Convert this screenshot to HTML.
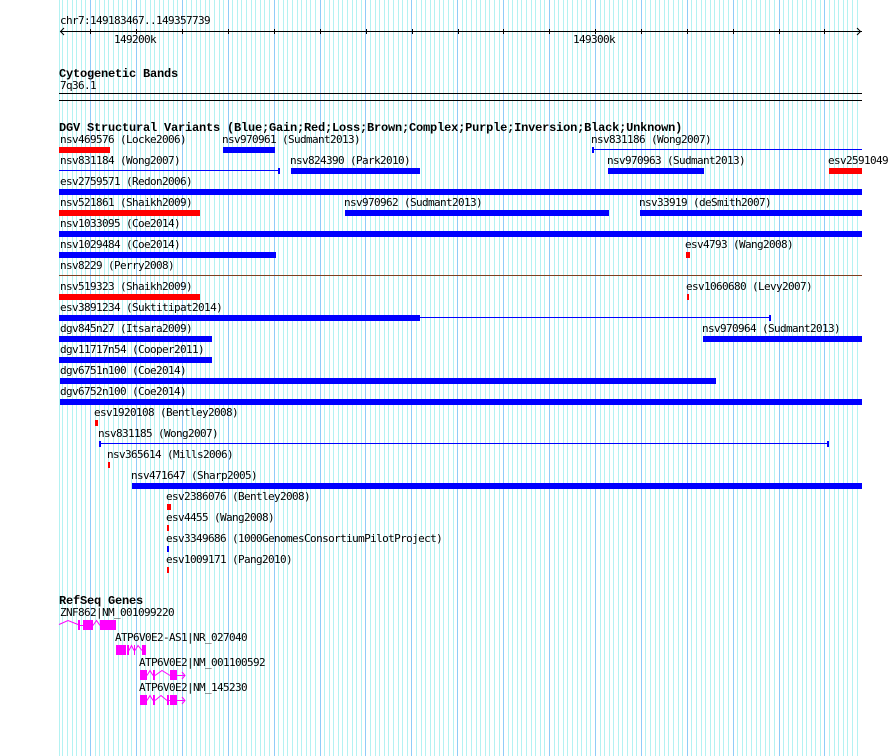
<!DOCTYPE html>
<html><head><meta charset="utf-8"><title>GBrowse</title>
<style>
html,body{margin:0;padding:0;background:#fff;width:890px;height:756px;overflow:hidden}
svg{display:block}
text{font-family:"DejaVu Sans Mono","Liberation Mono",monospace;font-size:11px;letter-spacing:-.62px;fill:#000;white-space:pre;transform:translateY(-1px)}
text.b{font-family:"Liberation Mono",monospace;font-size:12px;font-weight:bold;letter-spacing:-.2px}
.r{fill:#f00}.u{fill:#00f}.m{fill:#f0f}
</style></head><body>
<svg id="s" xmlns="http://www.w3.org/2000/svg" width="890" height="756" viewBox="0 0 890 756" shape-rendering="crispEdges">
<path id="minor" fill="#b4f2f2"/>
<path id="major" fill="#90ccf8"/>
<script>
(function(){function p(x){return "M"+x+" 0h1v756h-1z";}var a=p(59),b="";for(var k=149184;k<=149357;k++){var x=60+Math.round((k-149183.467)*4.5905);if(k%10==0)b+=p(x);else a+=p(x);}
document.getElementById("minor").setAttribute("d",a);document.getElementById("major").setAttribute("d",b);})();
</script>
<text x="60" y="25">chr7:149183467..149357739</text>
<rect x="60" y="31" width="802" height="1"/>
<path d="M90.5 29V34M136.5 29V34M182.5 29V34M228.5 29V34M274.5 29V34M320.5 29V34M366.5 29V34M412.5 29V34M458.5 29V34M503.5 29V34M549.5 29V34M595.5 29V34M641.5 29V34M687.5 29V34M733.5 29V34M779.5 29V34M824.5 29V34" stroke="#000" fill="none"/>
<g shape-rendering="auto"><path d="M64 28L60.5 31.5L64 35M857 28L860.5 31.5L857 35" stroke="#000" fill="none"/></g>
<text x="114" y="44">149200k</text>
<text x="573" y="44">149300k</text>
<text class="b" x="59" y="78">Cytogenetic Bands</text>
<text x="60" y="90">7q36.1</text>
<rect x="59" y="93" width="803" height="1"/>
<rect x="59" y="100" width="803" height="1"/>
<text class="b" x="59" y="132">DGV Structural Variants (Blue;Gain;Red;Loss;Brown;Complex;Purple;Inversion;Black;Unknown)</text>

<text x="60" y="144">nsv469576 (Locke2006)</text><rect class="r" x="59" y="147" width="51" height="6"/>
<text x="222" y="144">nsv970961 (Sudmant2013)</text><rect class="u" x="223" y="147" width="52" height="6"/>
<text x="591" y="144">nsv831186 (Wong2007)</text><rect class="u" x="592" y="147" width="2" height="6"/><rect class="u" x="594" y="149" width="268" height="1"/>

<text x="60" y="165">nsv831184 (Wong2007)</text><rect class="u" x="59" y="170" width="219" height="1"/><rect class="u" x="278" y="168" width="2" height="6"/>
<text x="290" y="165">nsv824390 (Park2010)</text><rect class="u" x="291" y="168" width="129" height="6"/>
<text x="607" y="165">nsv970963 (Sudmant2013)</text><rect class="u" x="608" y="168" width="96" height="6"/>
<text x="828" y="165">esv2591049</text><rect class="r" x="829" y="168" width="33" height="6"/>

<text x="60" y="186">esv2759571 (Redon2006)</text><rect class="u" x="59" y="189" width="803" height="6"/>

<text x="60" y="207">nsv521861 (Shaikh2009)</text><rect class="r" x="59" y="210" width="141" height="6"/>
<text x="344" y="207">nsv970962 (Sudmant2013)</text><rect class="u" x="345" y="210" width="264" height="6"/>
<text x="639" y="207">nsv33919 (deSmith2007)</text><rect class="u" x="640" y="210" width="222" height="6"/>

<text x="60" y="228">nsv1033095 (Coe2014)</text><rect class="u" x="59" y="231" width="803" height="6"/>

<text x="60" y="249">nsv1029484 (Coe2014)</text><rect class="u" x="59" y="252" width="217" height="6"/>
<text x="685" y="249">esv4793 (Wang2008)</text><rect class="r" x="686" y="252" width="4" height="6"/>

<text x="60" y="270">nsv8229 (Perry2008)</text><rect fill="#804020" x="59" y="275" width="803" height="1"/>

<text x="60" y="291">nsv519323 (Shaikh2009)</text><rect class="r" x="59" y="294" width="141" height="6"/>
<text x="686" y="291">esv1060680 (Levy2007)</text><rect class="r" x="687" y="294" width="2" height="6"/>

<text x="60" y="312">esv3891234 (Suktitipat2014)</text><rect class="u" x="59" y="315" width="361" height="6"/><rect class="u" x="420" y="317" width="349" height="1"/><rect class="u" x="769" y="315" width="2" height="6"/>

<text x="60" y="333">dgv845n27 (Itsara2009)</text><rect class="u" x="59" y="336" width="153" height="6"/>
<text x="702" y="333">nsv970964 (Sudmant2013)</text><rect class="u" x="703" y="336" width="159" height="6"/>

<text x="60" y="354">dgv11717n54 (Cooper2011)</text><rect class="u" x="59" y="357" width="153" height="6"/>
<text x="60" y="375">dgv6751n100 (Coe2014)</text><rect class="u" x="60" y="378" width="656" height="6"/>
<text x="60" y="396">dgv6752n100 (Coe2014)</text><rect class="u" x="60" y="399" width="802" height="6"/>

<text x="94" y="417">esv1920108 (Bentley2008)</text><rect class="r" x="95" y="420" width="3" height="6"/>
<text x="98" y="438">nsv831185 (Wong2007)</text><rect class="u" x="99" y="441" width="2" height="6"/><rect class="u" x="101" y="443" width="726" height="1"/><rect class="u" x="827" y="441" width="2" height="6"/>
<text x="107" y="459">nsv365614 (Mills2006)</text><rect class="r" x="108" y="462" width="2" height="6"/>
<text x="131" y="480">nsv471647 (Sharp2005)</text><rect class="u" x="132" y="483" width="730" height="6"/>
<text x="166" y="501">esv2386076 (Bentley2008)</text><rect class="r" x="167" y="504" width="4" height="6"/>
<text x="166" y="522">esv4455 (Wang2008)</text><rect class="r" x="167" y="525" width="2" height="6"/>
<text x="166" y="543">esv3349686 (1000GenomesConsortiumPilotProject)</text><rect class="u" x="167" y="546" width="2" height="6"/>
<text x="166" y="564">esv1009171 (Pang2010)</text><rect class="r" x="167" y="567" width="2" height="6"/>

<text class="b" x="59" y="605">RefSeq Genes</text>
<text x="60" y="617">ZNF862|NM_001099220</text>
<text x="115" y="642">ATP6V0E2-AS1|NR_027040</text>
<text x="139" y="667">ATP6V0E2|NM_001100592</text>
<text x="139" y="692">ATP6V0E2|NM_145230</text>

<g fill="none" stroke="#f0f" shape-rendering="auto">
<path d="M59 624.5L68 620.5L78 624.5M80 625.5H83M93 625.5L96.5 620.5L100 625.5"/>
<path d="M129 650.5L131.5 645.5L134 650.5M135 650.5L138 645.5L142 650.5"/>
<path d="M147 675.5L150 670.5L153 675.5M155 675.5L162 670.5L170 675.5M177 675.5H185M182 672L185 675.5L182 679"/>
<path d="M147 700.5L150 695.5L153 700.5M155 700.5L161 695.5L167 700.5M169 700.5H170M177 700.5H185M182 697L185 700.5L182 704"/>
</g>
<rect class="m" x="78" y="620" width="2" height="10"/><rect class="m" x="83" y="620" width="10" height="10"/><rect class="m" x="100" y="620" width="16" height="10"/>
<rect class="m" x="116" y="645" width="10" height="10"/><rect class="m" x="127" y="645" width="2" height="10"/><rect class="m" x="134" y="645" width="1" height="10"/><rect class="m" x="142" y="645" width="4" height="10"/>
<rect class="m" x="140" y="670" width="7" height="10"/><rect class="m" x="153" y="670" width="2" height="10"/><rect class="m" x="170" y="670" width="7" height="10"/>
<rect class="m" x="140" y="695" width="7" height="10"/><rect class="m" x="153" y="695" width="2" height="10"/><rect class="m" x="167" y="695" width="2" height="10"/><rect class="m" x="170" y="695" width="7" height="10"/>
</svg>
</body></html>
